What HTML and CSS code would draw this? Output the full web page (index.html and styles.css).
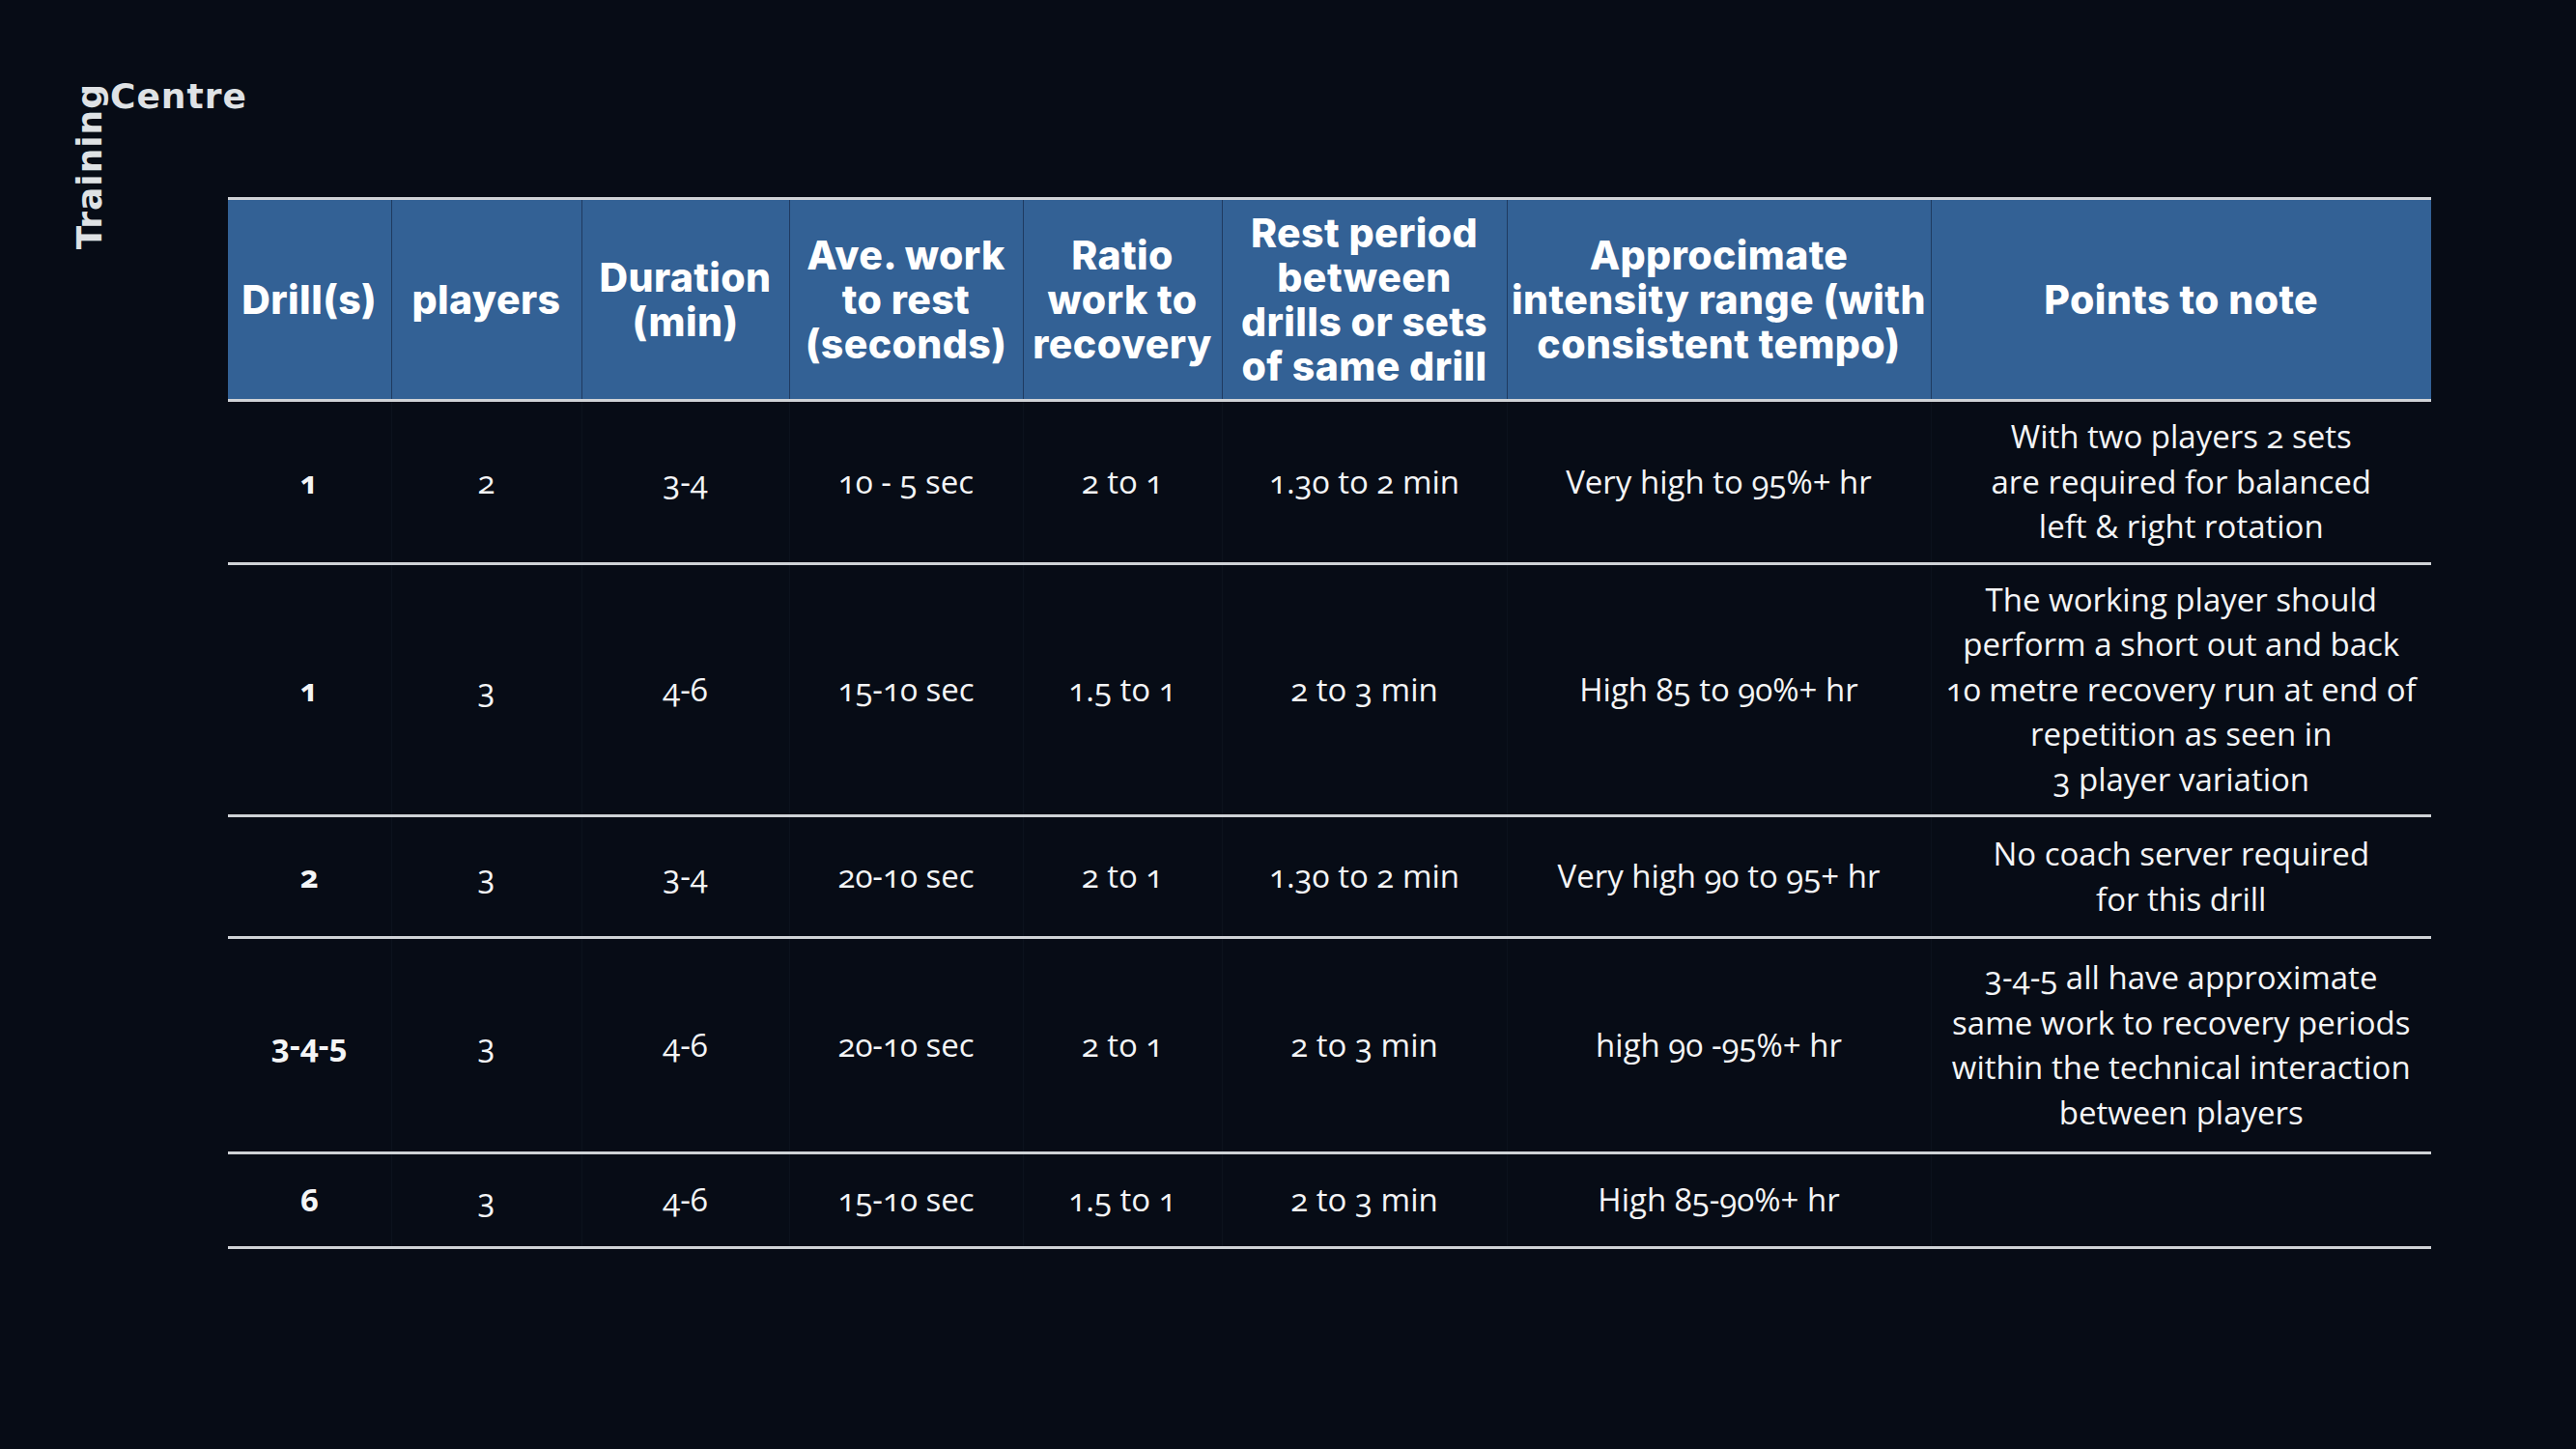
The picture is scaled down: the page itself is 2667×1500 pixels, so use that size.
FILE: index.html
```html
<!DOCTYPE html>
<html lang="en">
<head>
<meta charset="utf-8">
<title>Training Centre – Drill table</title>
<link rel="stylesheet" href="styles.css">
</head>
<body>
<div class="page">
  <div class="logo">
    <span class="logo-vert">Training</span>
    <span class="logo-word">Centre</span>
  </div>
  <div class="content">
    <table class="drills">
      <colgroup>
        <col class="c1"><col class="c2"><col class="c3"><col class="c4">
        <col class="c5"><col class="c6"><col class="c7"><col class="c8">
      </colgroup>
      <thead>
        <tr>
          <th>Drill(s)</th>
          <th>players</th>
          <th>Duration<br>(min)</th>
          <th>Ave. work<br>to rest<br>(seconds)</th>
          <th>Ratio<br>work to<br>recovery</th>
          <th>Rest period<br>between<br>drills or sets<br>of same drill</th>
          <th>Approcimate<br>intensity range (with<br>consistent tempo)</th>
          <th>Points to note</th>
        </tr>
      </thead>
      <tbody>
        <tr class="r1">
          <td class="drill">1</td><td>2</td><td>3-4</td><td>10 - 5 sec</td><td>2 to 1</td><td>1.30 to 2 min</td><td>Very high to 95%+ hr</td>
          <td>With two players 2 sets<br>are required for balanced<br>left &amp; right rotation</td>
        </tr>
        <tr class="r2">
          <td class="drill">1</td><td>3</td><td>4-6</td><td>15-10 sec</td><td>1.5 to 1</td><td>2 to 3 min</td><td>High 85 to 90%+ hr</td>
          <td>The working player should<br>perform a short out and back<br>10 metre recovery run at end of<br>repetition as seen in<br>3 player variation</td>
        </tr>
        <tr class="r3">
          <td class="drill">2</td><td>3</td><td>3-4</td><td>20-10 sec</td><td>2 to 1</td><td>1.30 to 2 min</td><td>Very high 90 to 95+ hr</td>
          <td>No coach server required<br>for this drill</td>
        </tr>
        <tr class="r4">
          <td class="drill">3-4-5</td><td>3</td><td>4-6</td><td>20-10 sec</td><td>2 to 1</td><td>2 to 3 min</td><td>high 90 -95%+ hr</td>
          <td>3-4-5 all have approximate<br>same work to recovery periods<br>within the technical interaction<br>between players</td>
        </tr>
        <tr class="r5">
          <td class="drill">6</td><td>3</td><td>4-6</td><td>15-10 sec</td><td>1.5 to 1</td><td>2 to 3 min</td><td>High 85-90%+ hr</td>
          <td></td>
        </tr>
      </tbody>
    </table>
  </div>
</div>
</body>
</html>
```

FILE: styles.css
```css
html, body {
  margin: 0;
  padding: 0;
  background: #070c16;
}

.page {
  width: 2667px;
  height: 1500px;
  display: grid;
  grid-template-columns: 236px 2281px;
  background: #070c16;
  overflow: hidden;
}

.logo {
  display: flex;
  align-items: flex-start;
  padding-left: 75px;
  padding-top: 82px;
  color: #dfe2e5;
  font-family: "DejaVu Sans", sans-serif;
  font-weight: 700;
  font-size: 36px;
  line-height: 36px;
  letter-spacing: 1px;
  white-space: nowrap;
}

.logo-vert {
  writing-mode: vertical-rl;
  transform: rotate(180deg);
  margin-top: 4px;
}

.logo-word {
  margin-left: 3px;
}

.content {
  padding-top: 204px;
}

.drills {
  width: 2281px;
  table-layout: fixed;
  border-collapse: collapse;
  color: #f4f5f6;
}

.c1 { width: 169px; }
.c2 { width: 197px; }
.c3 { width: 215px; }
.c4 { width: 242px; }
.c5 { width: 206px; }
.c6 { width: 295px; }
.c7 { width: 439px; }
.c8 { width: 518px; }

.drills thead tr {
  border-top: 3px solid #cfd2d6;
  border-bottom: 3px solid #cfd2d6;
}

.drills th {
  background: #336195;
  color: #ffffff;
  font-family: Inter, "DejaVu Sans", sans-serif;
  font-weight: 800;
  font-size: 41px;
  line-height: 46px;
  letter-spacing: 0.4px;
  text-align: center;
  vertical-align: middle;
  white-space: nowrap;
  padding: 0;
  height: 206px;
  border-left: 1px solid #1f3a60;
  border-right: 1px solid #1f3a60;
}

.drills th:first-child { border-left: none; }
.drills th:last-child { border-right: none; }

.drills tbody tr {
  border-bottom: 3px solid #cfd2d6;
}

.drills td {
  font-family: "Open Sans", "DejaVu Sans", sans-serif;
  font-size: 33px;
  line-height: 46.5px;
  font-variant-numeric: oldstyle-nums;
  text-align: center;
  vertical-align: middle;
  white-space: nowrap;
  padding: 0;
  border-left: 1px solid #0c121d;
  border-right: 1px solid #0c121d;
}

.drills td:first-child { border-left: none; }
.drills td:last-child { border-right: none; }

.drills td.drill {
  font-weight: 700;
}

.r1 td { height: 166px; }
.r2 td { height: 258px; }
.r3 td { height: 123px; }
.r4 td { height: 220px; }
.r5 td { height: 95px; }
```
